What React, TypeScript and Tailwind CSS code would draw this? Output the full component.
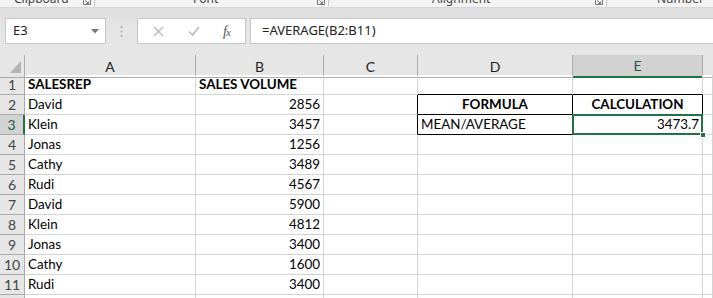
import React from 'react'

const cols = ['A', 'B', 'C', 'D', 'E']

const rows: [string, string][] = [
  ['David', '2856'],
  ['Klein', '3457'],
  ['Jonas', '1256'],
  ['Cathy', '3489'],
  ['Rudi', '4567'],
  ['David', '5900'],
  ['Klein', '4812'],
  ['Jonas', '3400'],
  ['Cathy', '1600'],
  ['Rudi', '3400'],
]

const grid = 'grid grid-cols-[25px_171px_128px_94px_155px_130px_1fr]'
const cell = 'h-5 border-r border-b border-[#d4d4d4] flex items-end px-[3px] pb-[1px] leading-[17px] text-[13.4px] whitespace-nowrap overflow-hidden'

function RibbonLabel({ x, children }: { x: number; children: React.ReactNode }) {
  return (
    <span className="absolute top-[-10px] text-[12px] text-[#444]" style={{ left: x }}>
      {children}
    </span>
  )
}

function Launcher({ x }: { x: number }) {
  return (
    <>
      <svg className="absolute top-0" style={{ left: x }} width="8" height="5" viewBox="0 0 8 5">
        <path d="M0.5 0v4.5h7V0" fill="none" stroke="#777" strokeWidth="1" />
        <path d="M2.5 0.5l3 3M5.5 1.5v2h-2" fill="none" stroke="#777" strokeWidth="1" />
      </svg>
      <div className="absolute top-0 h-[6px] w-px bg-[#c8c8c8]" style={{ left: x + 11 }} />
    </>
  )
}

function Ribbon() {
  return (
    <div className="relative h-[8px] bg-[#f3f3f3] border-b border-[#d6d6d6] overflow-hidden font-['Noto_Sans',sans-serif]">
      <RibbonLabel x={14}>Clipboard</RibbonLabel>
      <Launcher x={83} />
      <RibbonLabel x={193}>Font</RibbonLabel>
      <Launcher x={317} />
      <RibbonLabel x={432}>Alignment</RibbonLabel>
      <Launcher x={595} />
      <RibbonLabel x={657}>Number</RibbonLabel>
    </div>
  )
}

function FormulaBar() {
  return (
    <div className="h-[47px] bg-gradient-to-b from-[#dedede] via-[#e6e6e6] to-[#e6e6e6] flex items-start pt-[10px] font-['Noto_Sans',sans-serif] text-[13px] text-[#222]">
      <div className="ml-[5px] w-[101px] h-[26px] bg-white border border-[#c6c6c6] flex items-center pl-[7px] pr-[6px]">
        <span className="flex-1">E3</span>
        <svg width="8" height="5" viewBox="0 0 8 5">
          <path d="M0 0h8L4 4.5z" fill="#777" />
        </svg>
      </div>
      <div className="w-[31px] h-[26px] flex items-center justify-center">
        <svg width="3" height="11" viewBox="0 0 3 11">
          <rect x="0.5" y="0" width="2" height="2" fill="#b5b5b5" />
          <rect x="0.5" y="4.5" width="2" height="2" fill="#b5b5b5" />
          <rect x="0.5" y="9" width="2" height="2" fill="#b5b5b5" />
        </svg>
      </div>
      <div className="w-[109px] h-[26px] bg-white border border-[#c6c6c6] flex items-center">
        <svg className="ml-[15px]" width="11" height="11" viewBox="0 0 11 11">
          <path d="M1 1l9 9M10 1l-9 9" stroke="#b8b8b8" strokeWidth="1.3" />
        </svg>
        <svg className="ml-[24px]" width="12" height="10" viewBox="0 0 12 10">
          <path d="M1 5.5l3.5 3.5L11 1" fill="none" stroke="#b8b8b8" strokeWidth="1.6" />
        </svg>
        <span className="ml-[23px] font-['Liberation_Serif',serif] italic text-[14px] text-[#555] tracking-[-1px]">
          f<span className="text-[11px]">x</span>
        </span>
      </div>
      <div className="ml-[4px] flex-1 h-[26px] bg-white border border-r-0 border-[#c6c6c6] flex items-center pl-[11px]">
        =AVERAGE(B2:B11)
      </div>
    </div>
  )
}

function HeaderRow() {
  return (
    <div className={`${grid} h-5 bg-[#e6e6e6] text-[#222] text-[14px]`}>
      <div className="relative border-r border-b border-[#ababab]">
        <svg className="absolute right-[3px] bottom-[4px]" width="11" height="12" viewBox="0 0 11 12">
          <path d="M11 0v12H0z" fill="#b4b4b4" />
        </svg>
      </div>
      {cols.map((c) => (
        <div
          key={c}
          className={
            c === 'E'
              ? 'flex items-center justify-center bg-[#d2d2d2] border-r border-[#ababab] border-b-2 border-b-[#217346] text-[#1e5a3a]'
              : 'flex items-center justify-center border-r border-b border-[#ababab]'
          }
        >
          {c}
        </div>
      ))}
      <div className="border-b border-[#ababab]" />
    </div>
  )
}

function RowHead({ n }: { n: number }) {
  const sel = n === 3
  return (
    <div
      className={
        sel
          ? 'h-5 bg-[#d2d2d2] border-b border-[#ababab] border-r-2 border-r-[#217346] flex items-center justify-center text-[#1e5a3a] text-[14px]'
          : 'h-5 bg-[#e6e6e6] border-r border-b border-[#ababab] flex items-center justify-center text-[#444] text-[14px]'
      }
    >
      {n}
    </div>
  )
}

export default function App() {
  return (
    <div className="w-[713px] h-[298px] overflow-hidden bg-white font-['Lato',sans-serif] text-black">
      <Ribbon />
      <FormulaBar />
      <HeaderRow />

      {/* row 1 */}
      <div className={grid}>
        <RowHead n={1} />
        <div className={`${cell} font-bold`}>SALESREP</div>
        <div className={`${cell} font-bold`}>SALES VOLUME</div>
        <div className={cell} />
        <div className={`${cell} border-b-black`} />
        <div className={`${cell} border-b-black`} />
        <div className={cell} />
      </div>

      {rows.map(([name, vol], i) => {
        const n = i + 2
        const inTable = n === 2 || n === 3
        return (
          <div key={n} className={grid}>
            <RowHead n={n} />
            <div className={cell}>{name}</div>
            <div className={`${cell} justify-end`}>{vol}</div>
            <div className={inTable ? `${cell} border-r-black` : cell} />
            {n === 2 ? (
              <div className={`${cell} border-r-black border-b-black justify-center font-bold`}>FORMULA</div>
            ) : n === 3 ? (
              <div className={`${cell} border-r-black border-b-black`}>MEAN/AVERAGE</div>
            ) : (
              <div className={cell} />
            )}
            {n === 2 ? (
              <div className={`${cell} border-r-black border-b-black justify-center font-bold`}>CALCULATION</div>
            ) : n === 3 ? (
              <div className={`${cell} relative overflow-visible border-r-black border-b-black justify-end`}>
                3473.7
                <div className="absolute left-[-1px] top-[-1px] right-[-1px] bottom-[-1px] border-2 border-[#217346]" />
                <div className="absolute right-[-4px] bottom-[-4px] w-[6px] h-[6px] bg-[#217346] border border-white" />
              </div>
            ) : (
              <div className={cell} />
            )}
            <div className={cell} />
          </div>
        )
      })}

      <div className={grid}>
        <RowHead n={12} />
        <div className={cell} />
        <div className={cell} />
        <div className={cell} />
        <div className={cell} />
        <div className={cell} />
        <div className={cell} />
      </div>
    </div>
  )
}
